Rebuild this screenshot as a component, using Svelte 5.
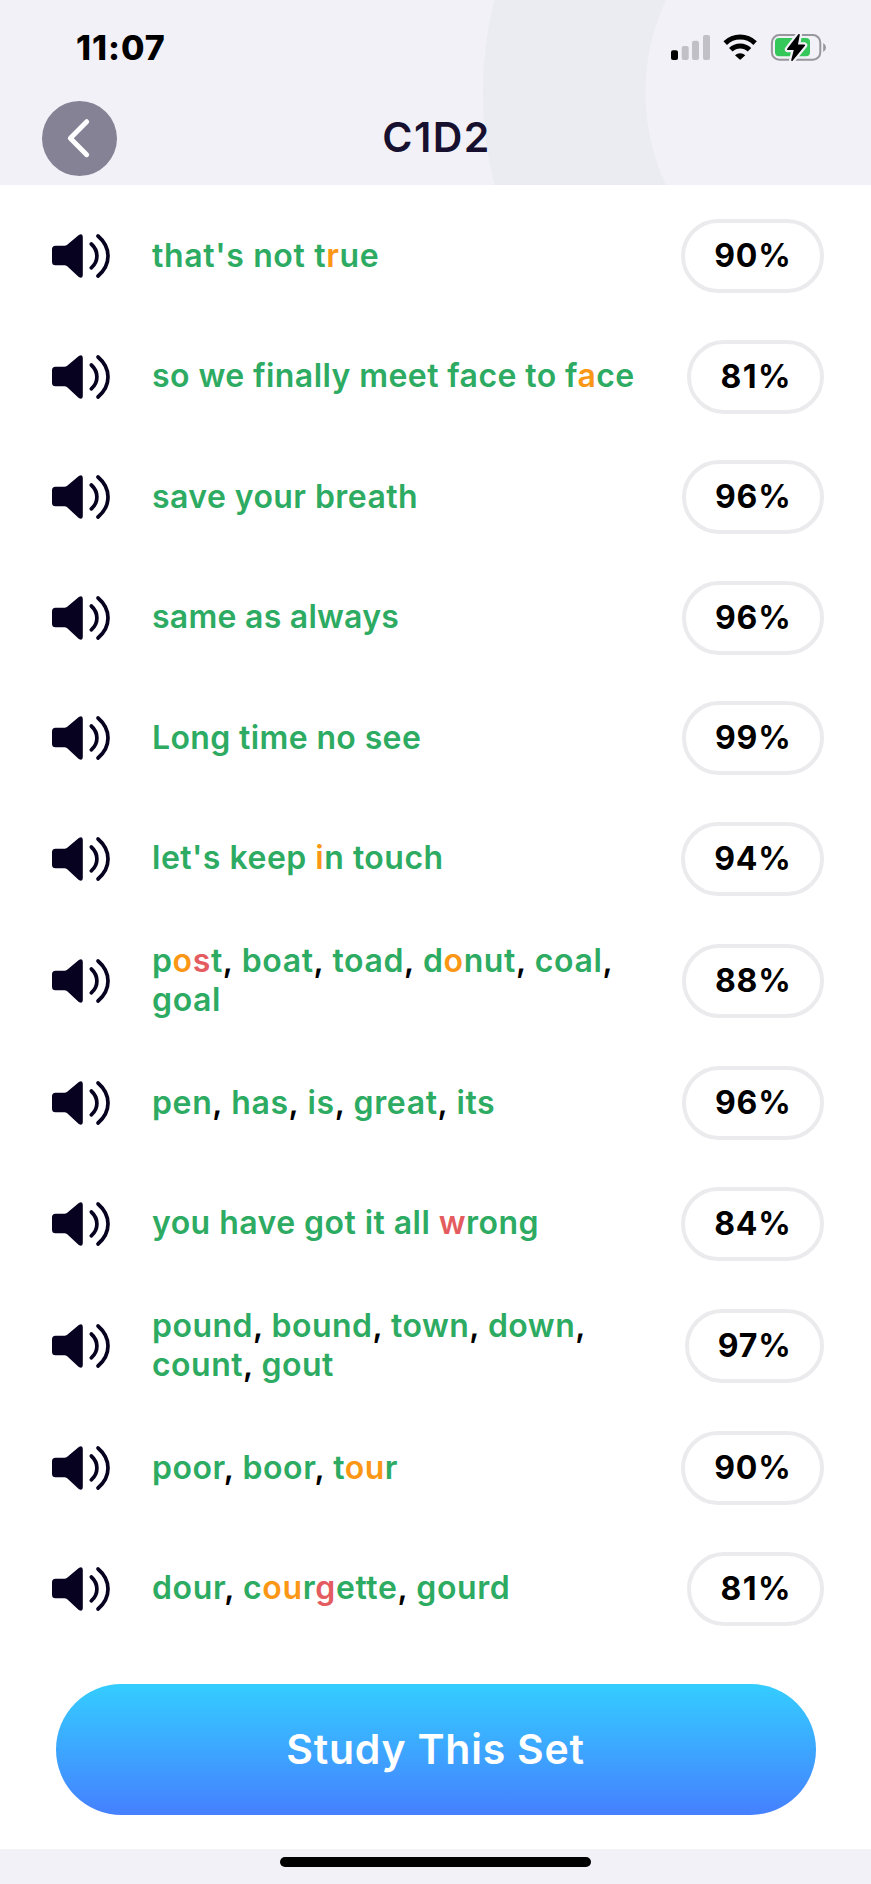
<script>
  // In phrases: {x} marks an average sound, [x] a weak one; commas are neutral.
  // "track" is the letter spacing of the phrase in px.
  const rows = [
    { text: "that's not t{r}ue", score: 90, track: 0.66 },
    { text: 'so we finally meet face to f{a}ce', score: 81, track: 0.42 },
    { text: 'save your breath', score: 96, track: 0.43 },
    { text: 'same as always', score: 96, track: 0.25 },
    { text: 'Long time no see', score: 99, track: 0.37 },
    { text: "let's keep {i}n touch", score: 94, track: 0.5 },
    { text: 'p{o}[s]t, boat, toad, d{o}nut, coal, goal', score: 88, track: 0.62 },
    { text: 'pen, has, is, great, its', score: 96, track: 0.62 },
    { text: 'you have got it all [w]rong', score: 84, track: 0.45 },
    { text: 'pound, bound, town, down, count, gout', score: 97, track: 0.47 },
    { text: 'poor, boor, t{ou}r', score: 90, track: 0.55 },
    { text: 'dour, c{ou}r[g]ette, gourd', score: 81, track: 0.61 }
  ];

  function parts(text) {
    return text.match(/\{[^}]*\}|\[[^\]]*\]|,|[^{[,]+/g).map((p) => {
      if (p[0] === '{') return { t: p.slice(1, -1), c: 'fair' };
      if (p[0] === '[') return { t: p.slice(1, -1), c: 'weak' };
      return { t: p, c: p === ',' ? 'plain' : 'good' };
    });
  }
</script>

<div class="screen">
  <header>
    <svg class="ring" width="871" height="185" viewBox="0 0 871 185">
      <circle cx="863.5" cy="92.5" r="299.3" fill="none" stroke="#eaecf1" stroke-width="162.5" />
    </svg>
    <div class="status">
      <span class="time">11:07</span>
      <svg width="160" height="36" viewBox="668 30 160 36">
        <rect x="671" y="50.3" width="7" height="9.7" rx="2" />
        <g fill="#c1c0c6">
          <rect x="681.7" y="46" width="7" height="14" rx="2" />
          <rect x="692" y="40.7" width="7" height="19.3" rx="2" />
          <rect x="703" y="35" width="7" height="25" rx="2" />
        </g>
        <g fill="none" stroke="#000" stroke-width="5">
          <path d="M725.2 43.1a21.3 21.3 0 0 1 29.9 0" />
          <path d="M730.8 49.8a13.3 13.3 0 0 1 18.7 0" />
        </g>
        <path d="M735 55.3a7.3 7.3 0 0 1 10.3 0L740.9 59.3Q740.15 60 739.4 59.3Z" />
        <rect x="771.9" y="35" width="48.4" height="24.7" rx="7.5" fill="none" stroke="#98979d" stroke-width="2" />
        <path d="M823.2 43v9q2.8-1.500 2.800-4.500t-2.800-4.500Z" fill="#98979d" />
        <rect x="775" y="38" width="35" height="18.3" rx="4" fill="#34c759" />
        <path d="M799 34.7 787.8 49.3h7L792 60.3 804.3 45.3h-7.3Z" fill="#f2f1f7" stroke="#f2f1f7" stroke-width="6" stroke-linejoin="round" />
        <path d="M799 34.7 787.8 49.3h7L792 60.3 804.3 45.3h-7.3Z" stroke="#000" stroke-width="1.6" stroke-linejoin="round" />
      </svg>
    </div>
    <div class="nav">
      <button class="back" aria-label="Back">
        <svg width="75" height="75" viewBox="0 0 75 75">
          <path d="M44.7 20.700 28.300 37.200 44.700 53.700" fill="none" stroke="#fff" stroke-width="4.900" stroke-linecap="round" stroke-linejoin="round" />
        </svg>
      </button>
      <h1>C1D2</h1>
    </div>
  </header>

  <main>
    <ul>
      {#each rows as row}
        <li>
          <svg class="speaker" width="60" height="46" viewBox="51 232.5 60 46">
            <path d="M55.5 245.3H64.5Q66 245.3 67.2 244.3L78.5 234.7Q82.8 232.3 82.8 236.5V274.5Q82.8 278.7 78.5 276.3L67.2 265.8Q66 264.8 64.5 264.8H55.5Q52 264.8 52 261.3V248.8Q52 245.3 55.5 245.3Z" fill="#07021f" />
            <path d="M91.3 243.5Q96.9 248.5 96.9 255.5T91.3 267.3M98 235.5Q108 244 108 255.5T98 275.5" fill="none" stroke="#07021f" stroke-width="3.7" stroke-linecap="round" />
          </svg>
          <p style="letter-spacing: {row.track}px">{#each parts(row.text) as part}<span class={part.c}>{part.t}</span>{/each}</p>
          <span class="score" class:narrow={row.score === 81}>{row.score}%</span>
        </li>
      {/each}
    </ul>
    <button class="study">Study This Set</button>
  </main>

  <footer><div class="home"></div></footer>
</div>

<style>
  :global(body) { margin: 0; background: #f2f1f7; }
  .screen {
    width: 871px;
    height: 1884px;
    display: flex;
    flex-direction: column;
    overflow: hidden;
    font-family: Inter, sans-serif;
    color: #000;
    background: #f2f1f7;
  }
  button { border: 0; padding: 0; font: inherit; }
  header { height: 185px; position: relative; flex: none; }
  .ring { position: absolute; inset: 0; }
  .status {
    position: relative;
    height: 66px;
    padding: 30px 43px 0 76px;
    box-sizing: border-box;
    display: flex;
    justify-content: space-between;
  }
  .time { font-size: 34px; font-weight: 780; line-height: 36px; letter-spacing: 1px; }
  .nav {
    position: relative;
    display: grid;
    grid-template-columns: 75px 1fr 75px;
    padding: 35px 42px 0;
  }
  .back { width: 75px; height: 75px; border-radius: 50%; background: #858295; }
  .back svg { display: block; }
  h1 {
    margin: 0;
    padding-left: 2px;
    text-align: center;
    font-size: 41px;
    font-weight: 600;
    line-height: 73px;
    letter-spacing: 1.4px;
    color: #17112f;
  }
  main { height: 1664px; flex: none; background: #fff; display: flex; flex-direction: column; }
  ul {
    list-style: none;
    margin: 0;
    padding: 34px 47px 0 51px;
    display: flex;
    flex-direction: column;
    gap: 46.55px;
  }
  li { display: flex; align-items: center; min-height: 74px; }
  .speaker { flex: none; }
  p {
    flex: 1;
    margin: 0 0 0 41px;
    max-width: 490px;
    font-size: 32px;
    font-weight: 600;
    line-height: 38.7px;
  }
  .good { color: #2dab62; }
  .fair { color: #fb9715; }
  .weak { color: #e45b60; }
  .score {
    margin-left: auto;
    height: 74px;
    box-sizing: border-box;
    border: 4px solid #ebebed;
    border-radius: 37px;
    padding: 0 28.5px 0 29px;
    font-size: 32px;
    font-weight: 700;
    line-height: 66px;
    letter-spacing: 0.8px;
  }
  .narrow { letter-spacing: 1.5px; padding-right: 28px; }
  .study {
    width: 760px;
    height: 130.5px;
    margin: auto 0 34.5px 55.5px;
    border-radius: 66px;
    background: linear-gradient(#34cdff, #4580ff);
    color: #fff;
    font-size: 41px;
    font-weight: 600;
    letter-spacing: 0.75px;
  }
  footer { flex: 1; display: flex; justify-content: center; padding-top: 7.5px; }
  .home { width: 311px; height: 10.5px; border-radius: 6px; background: #000; }
</style>
